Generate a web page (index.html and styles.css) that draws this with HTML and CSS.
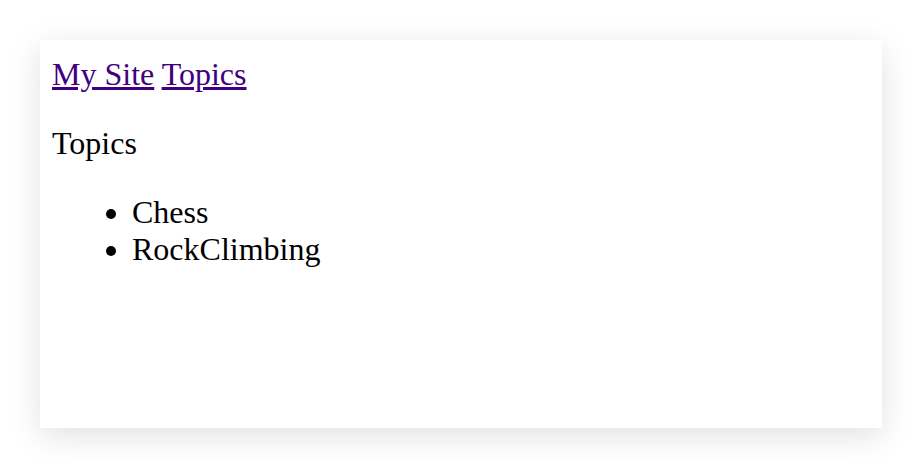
FILE: index.html
```html
<!DOCTYPE html>
<html>
<head>
<meta charset="utf-8">
<link rel="stylesheet" href="styles.css">
</head>
<body>
<div class="card">
  <div class="nav"><a href="#">My Site</a> <a href="#">Topics</a></div>
  <p class="title">Topics</p>
  <ul class="list">
    <li>Chess</li>
    <li>RockClimbing</li>
  </ul>
</div>
</body>
</html>
```
FILE: styles.css
```css
html, body {
  margin: 0;
  padding: 0;
  background: #ffffff;
}
body {
  padding: 40px;
  font-family: "Liberation Serif", "Times New Roman", serif;
  font-size: 32px;
  color: #000;
}
.card {
  background: #fff;
  height: 388px;
  box-sizing: border-box;
  padding: 16px 12px;
  box-shadow: 0 8px 30px rgba(0, 0, 0, 0.12);
}
.nav a {
  color: #3f0073;
  color: #400080;
}
.title {
  margin: 32px 0;
}
.list {
  margin: 32px 0;
  padding-left: 80px;
}
```
